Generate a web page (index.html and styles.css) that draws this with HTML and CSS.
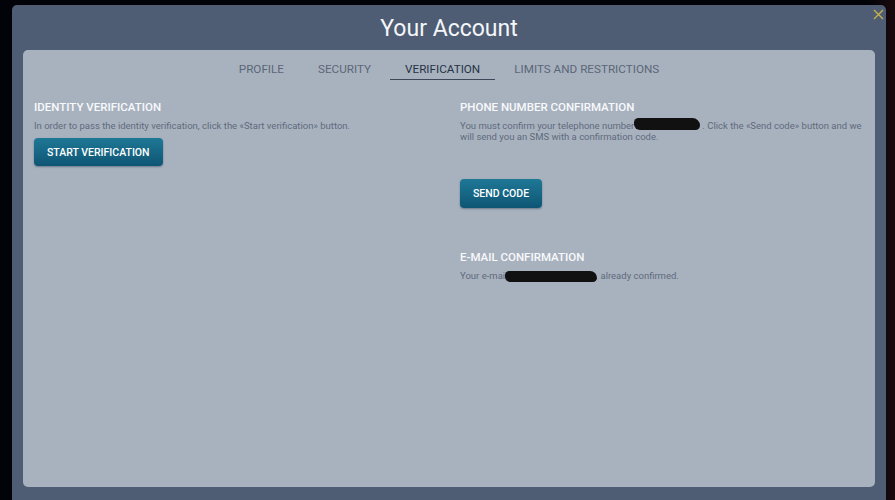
FILE: index.html
```html
<!DOCTYPE html>
<html lang="en">
<head>
    <meta charset="UTF-8">
    <meta name="viewport" content="width=device-width, initial-scale=1.0">
    <title>Your Account</title>
    <link rel="stylesheet" href="styles.css">
</head>
<body>

<div class="page">
    <div class="modal">
        <div class="modal-head">
            <h1>Your Account</h1>
            <span class="close">
                <svg width="11" height="11" viewBox="0 0 11 11"><path d="M1 1L10 10M10 1L1 10" stroke="#c9b24a" stroke-width="1.3"/></svg>
            </span>
        </div>

        <div class="panel">
            <div class="tabs">
                <span class="tab">PROFILE</span>
                <span class="tab">SECURITY</span>
                <span class="tab active">VERIFICATION</span>
                <span class="tab">LIMITS AND RESTRICTIONS</span>
            </div>

            <div class="columns">
                <div class="col">
                    <h2>IDENTITY VERIFICATION</h2>
                    <p>In order to pass the identity verification, click the «Start verification» button.</p>
                    <button class="btn">START VERIFICATION</button>
                </div>

                <div class="col">
                    <h2>PHONE NUMBER CONFIRMATION</h2>
                    <p>You must confirm your telephone number<span class="mark phone-mark"></span>. Click the «Send code» button and we will send you an SMS with a confirmation code.</p>
                    <button class="btn send">SEND CODE</button>

                    <h2 class="email-title">E-MAIL CONFIRMATION</h2>
                    <p>Your e-mai<span class="mark email-mark"></span> already confirmed.</p>
                </div>
            </div>
        </div>
    </div>
</div>

</body>
</html>
```

FILE: styles.css
```css
body {
    margin: 0;
    background-color: #05060a;
    font-family: Roboto, "Liberation Sans", sans-serif;
    overflow: hidden;
}

.page {
    height: 500px;
    padding: 5px 9px 0 12px;
    box-sizing: border-box;
    background: linear-gradient(to right, #020308 97%, #1a0a0e 100%);
}

.modal {
    height: 495px;
    background-color: #4e5d74;
    border-radius: 5px 5px 0 0;
    padding: 0 11px;
    box-sizing: border-box;
}

.modal-head {
    height: 45px;
    position: relative;
    display: flex;
    align-items: center;
    justify-content: center;
}

.modal-head h1 {
    margin: 0;
    font-size: 23px;
    font-weight: 400;
    color: #f4f6f9;
    padding-top: 1px;
}

.close {
    position: absolute;
    right: -9px;
    top: 0;
}

.panel {
    height: 437px;
    background-color: #a8b2bf;
    border-radius: 5px;
    padding: 0 11px;
    box-sizing: border-box;
}

.tabs {
    display: flex;
    justify-content: center;
    gap: 4px;
    padding-top: 12px;
}

.tab {
    font-size: 11.7px;
    color: #5b6677;
    padding: 0 15px 3px;
    line-height: 14px;
    border-bottom: 1.5px solid transparent;
}

.tab.active {
    color: #263244;
    border-bottom-color: #3c4858;
}

.columns {
    display: grid;
    grid-template-columns: 1fr 1fr;
    column-gap: 22px;
    padding-top: 19px;
}

h2 {
    margin: 0;
    font-size: 11.5px;
    font-weight: 500;
    color: #f8f9fb;
    line-height: 16px;
}

p {
    margin: 5px 0 0;
    font-size: 9.5px;
    line-height: 11px;
    color: #5f6a7b;
}

.btn {
    margin-top: 7px;
    height: 28px;
    padding: 0 13px;
    border: none;
    border-radius: 4px;
    background: linear-gradient(#1e7896, #0f5574);
    box-shadow: 0 1px 2px rgba(20, 40, 60, 0.4);
    color: #fff;
    font-family: inherit;
    font-size: 10.5px;
    font-weight: 500;
}

.btn.send {
    margin-top: 37px;
    height: 29px;
}

.email-title {
    margin-top: 41px;
}

.mark {
    display: inline-block;
    background-color: #111;
    border-radius: 6px 10px 6px 8px;
    vertical-align: middle;
}

.phone-mark {
    width: 66px;
    height: 12px;
    margin: -4px 2px 0 0;
}

.email-mark {
    width: 92px;
    height: 11px;
    margin: 0 1px 0 0;
}
```
